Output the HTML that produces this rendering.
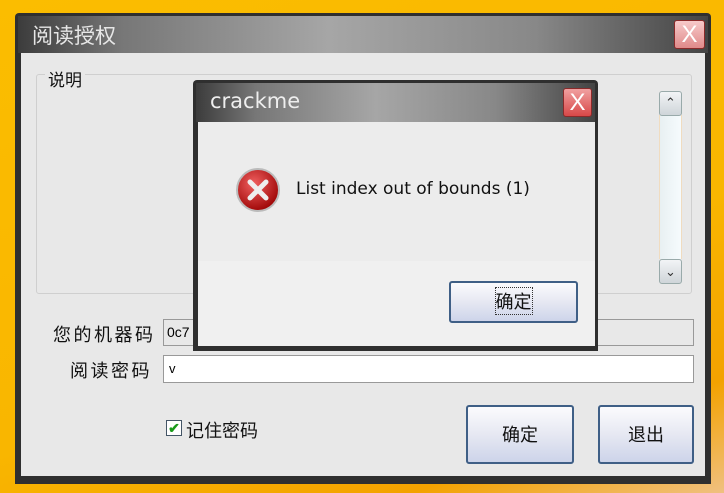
<!DOCTYPE html>
<html><head><meta charset="utf-8"><style>
*{margin:0;padding:0;box-sizing:border-box}
body{width:724px;height:493px;overflow:hidden;position:relative;background:linear-gradient(160deg,#fbbd00 0%,#f9b600 60%,#f3a200 85%,#f0c080 100%);font-family:"Liberation Sans","Noto Sans CJK SC",sans-serif}
.a{position:absolute}
.tb{background:linear-gradient(90deg,#3c3c3c 0%,#777 15%,#a6a6a6 45%,#888 75%,#444 100%)}
.x{background:linear-gradient(#f0a0a0,#d84848);border:1px solid #8a2a2a;border-radius:3px;color:#fff;text-align:center}
.btn{background:linear-gradient(#fbfbfd,#e6e8f2 50%,#cdd4ea);border:2px solid #3f5f86;border-radius:3px;text-align:center;font-size:18px;color:#111}
.cn{font-family:"WenQuanYi Zen Hei","Noto Sans CJK SC",sans-serif}
.dv{font-family:"DejaVu Sans",sans-serif}
</style></head><body>
<div class="a" style="left:15px;top:13px;width:696px;height:471px;background:#2f2f2f;border-radius:4px 4px 0 0"></div>
<div class="a tb" style="left:18px;top:16px;width:690px;height:37px"></div>
<div class="a cn" style="left:32px;top:20px;font-size:21px;color:#e6e6e6">阅读授权</div>
<div class="a x" style="left:674px;top:20px;width:31px;height:29px;font-size:24px;line-height:27px;background:linear-gradient(#f7caca,#e08a8a)">X</div>
<div class="a" style="left:21px;top:53px;width:684px;height:423px;background:#e8e8e8"></div>
<div class="a" style="left:36px;top:74px;width:656px;height:220px;border:1px solid #cfcfcf;border-radius:3px"></div>
<div class="a cn" style="left:45px;top:66px;font-size:17px;background:#e8e8e8;padding:0 3px;color:#111">说明</div>
<div class="a" style="left:659px;top:115px;width:23px;height:144px;background:linear-gradient(90deg,#e8f0f2,#f6fbfd);border-left:1px solid #f0dcc0;border-right:1px solid #f0dcc0"></div>
<div class="a" style="left:659px;top:91px;width:23px;height:25px;background:linear-gradient(#f2f4f6,#cfd5d9);border:1px solid #9aa;border-radius:3px;text-align:center;font-size:13px;line-height:22px;color:#333">&#8963;</div>
<div class="a" style="left:659px;top:259px;width:23px;height:25px;background:linear-gradient(#f2f4f6,#cfd5d9);border:1px solid #9aa;border-radius:3px;text-align:center;font-size:13px;line-height:24px;color:#333">&#8964;</div>
<div class="a cn" style="left:53px;top:321px;font-size:18px;letter-spacing:2.5px;color:#111">您的机器码</div>
<div class="a" style="left:163px;top:319px;width:531px;height:27px;border:1px solid #999;background:#e8e8e8;font-size:14px;line-height:24px;padding-left:3px">0c7</div>
<div class="a cn" style="left:70px;top:357px;font-size:18px;letter-spacing:2.5px;color:#111">阅读密码</div>
<div class="a" style="left:163px;top:355px;width:531px;height:28px;border:1px solid #999;background:#fff;font-size:13px;line-height:26px;padding-left:5px">v</div>
<div class="a" style="left:166px;top:420px;width:16px;height:16px;border:1px solid #456;background:#fff;color:#1a9a1a;font-size:14px;line-height:14px;text-align:center;font-weight:bold">✔</div>
<div class="a cn" style="left:186px;top:417px;font-size:18px;color:#111">记住密码</div>
<div class="a btn cn" style="left:466px;top:405px;width:108px;height:59px;line-height:55px">确定</div>
<div class="a btn cn" style="left:598px;top:405px;width:96px;height:59px;line-height:55px">退出</div>
<!-- dialog -->
<div class="a" style="left:193px;top:80px;width:405px;height:271px;background:#2f2f2f;border-radius:4px 4px 0 0"></div>
<div class="a tb" style="left:196px;top:83px;width:399px;height:39px"></div>
<div class="a dv" style="left:210px;top:89px;font-size:21px;color:#eee">crackme</div>
<div class="a x" style="left:563px;top:88px;width:29px;height:29px;font-size:24px;line-height:27px">X</div>
<div class="a" style="left:198px;top:122px;width:397px;height:139px;background:#ececec"></div>
<div class="a" style="left:198px;top:261px;width:397px;height:85px;background:#f0f0f0"></div>
<svg class="a" style="left:235px;top:167px" width="46" height="46" viewBox="0 0 46 46"><defs><radialGradient id="g" cx="40%" cy="35%" r="65%"><stop offset="0" stop-color="#f06060"/><stop offset="1" stop-color="#a00808"/></radialGradient></defs><circle cx="23" cy="23" r="21" fill="url(#g)" stroke="#bbb" stroke-width="2"/><path d="M15 15L31 31M31 15L15 31" stroke="#eee" stroke-width="5" stroke-linecap="round"/></svg>
<div class="a dv" style="left:296px;top:179px;font-size:17px;color:#111">List index out of bounds (1)</div>
<div class="a btn cn" style="left:449px;top:281px;width:129px;height:42px;line-height:36px"><span style="outline:1px dotted #333">确定</span></div>
</body></html>
